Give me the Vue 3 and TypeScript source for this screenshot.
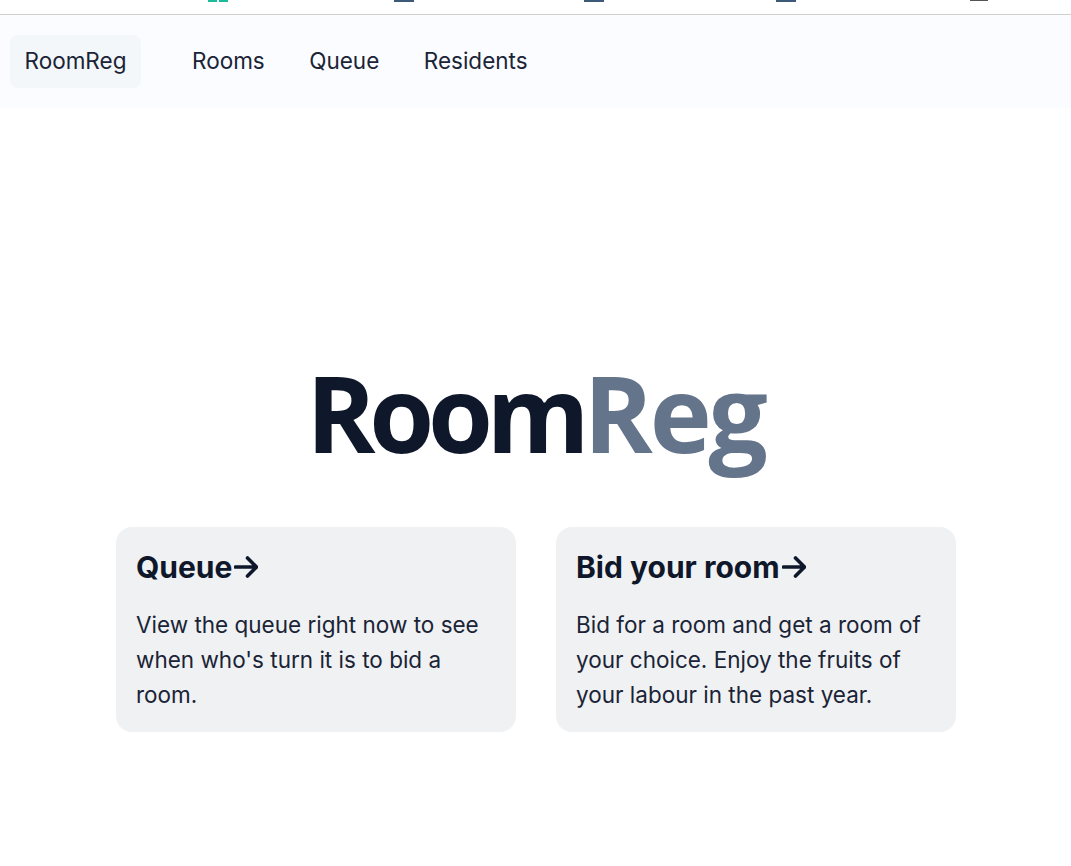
<script setup lang="ts">
const links: string[] = ['Rooms', 'Queue', 'Residents']
const stubs = [
  { kind: 'green', gap: 208 },
  { kind: 'blue', gap: 166 },
  { kind: 'blue', gap: 170 },
  { kind: 'blue', gap: 172 },
  { kind: 'grey', gap: 174 },
]
const cards = [
  { title: 'Queue', text: "View the queue right now to see when who's turn it is to bid a room." },
  { title: 'Bid your room', text: 'Bid for a room and get a room of your choice. Enjoy the fruits of your labour in the past year.' },
]
</script>

<template>
  <div class="page">
    <div class="strip">
      <span v-for="(s, i) in stubs" :key="i" class="stub" :class="s.kind" :style="{ marginLeft: s.gap + 'px' }"></span>
    </div>
    <nav class="nav">
      <a class="brand">RoomReg</a>
      <ul class="links">
        <li v-for="l in links" :key="l">{{ l }}</li>
      </ul>
    </nav>
    <main class="hero">
      <h1 class="logo">Room<span class="accent">Reg</span></h1>
      <section class="cards">
        <article v-for="c in cards" :key="c.title" class="card">
          <h2 class="title">{{ c.title }}<svg class="arrow" viewBox="0 0 24 24" fill="none" stroke="currentColor" stroke-width="3.6" stroke-linecap="round" stroke-linejoin="round"><path d="M1.5 12h21M13.5 3l9 9-9 9" /></svg></h2>
          <p class="text">{{ c.text }}</p>
        </article>
      </section>
    </main>
  </div>
</template>

<style>
html, body { margin: 0; background: #fff; }
</style>

<style scoped>
.page { min-height: 866px; font-family: Inter, sans-serif; color: #1a2436; background: #fff; }
.strip { height: 14px; display: flex; align-items: flex-start; border-bottom: 1px solid #cfcfcf; }
.stub { display: block; width: 20px; height: 2px; }
.green { background: linear-gradient(90deg, #1abc9c 0 9px, #fff 9px 11px, #1abc9c 11px); }
.blue { background: #3d5a7a; }
.grey { background: #555; width: 18px; height: 1px; }
.nav { height: 93px; box-sizing: border-box; padding: 20px 10px; display: flex; align-items: center; background: #fafcff; }
.brand { box-sizing: border-box; height: 53px; width: 131px; padding-bottom: 2px; display: flex; align-items: center; justify-content: center; border-radius: 8px; background: #f4f7fa; font-size: 22.5px; }
.links { list-style: none; margin: 0 0 2px 51px; padding: 0; display: flex; gap: 44.5px; font-size: 22.5px; }
.hero { display: flex; flex-direction: column; align-items: center; padding-top: 233px; }
.logo { margin: 0; font-family: "Open Sans", sans-serif; font-weight: 700; font-size: 105px; letter-spacing: -6.3px; line-height: 144px; color: #0f172a; white-space: nowrap; }
.accent { color: #64748b; letter-spacing: -3.1px; }
.cards { display: flex; gap: 40px; margin-top: 42px; }
.card { box-sizing: border-box; width: 400px; height: 205px; padding: 20px 20px 20px 20.5px; border-radius: 16px; background: #eff1f3; }
.title { margin: 0; display: flex; align-items: center; font-size: 30px; line-height: 40px; font-weight: 700; color: #0f172a; }
.arrow { width: 24px; height: 24px; margin-left: 2px; }
.text { margin: 20px 0 0; font-size: 22.5px; line-height: 35px; }
</style>
